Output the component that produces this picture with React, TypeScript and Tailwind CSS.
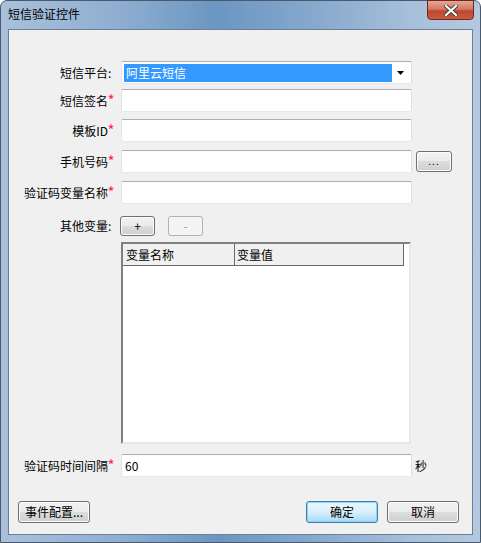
import React from "react";

const font = { fontFamily: '"Noto Sans CJK SC", "Liberation Sans", sans-serif' };

function Label({ text, star, colon }: { text: string; star?: boolean; colon?: boolean }) {
  return (
    <div className="w-[105px] flex justify-end items-center text-[12px] leading-none text-black whitespace-nowrap">
      <span>{text}</span>
      {colon && <span className="w-[6px]">:</span>}
      {star && <span className="w-[6px] text-[#ff2a55] text-[12px] font-bold -mt-[3px]">*</span>}
    </div>
  );
}

function TextBox({ value, w = "w-[291px]" }: { value?: string; w?: string }) {
  return (
    <div
      className={`${w} h-[23px] ml-[7px] bg-white border border-t-[#abadb3] border-l-[#e2e3ea] border-r-[#dbdfe6] border-b-[#e3e9ef] rounded-[2px] flex items-center pl-[3px] text-[12px] text-black`}
    >
      {value}
    </div>
  );
}

function Btn({
  children,
  w = "w-[72px]",
  h = "h-[22px]",
  primary,
  disabled,
  className = "",
}: {
  children: React.ReactNode;
  w?: string;
  h?: string;
  primary?: boolean;
  disabled?: boolean;
  className?: string;
}) {
  const base = `${w} ${h} rounded-[3px] border flex items-center justify-center text-[12px] leading-none ${className}`;
  if (disabled)
    return <div className={`${base} border-[#adb2b5] bg-[#f4f4f4] text-[#a0a0a0]`}>{children}</div>;
  if (primary)
    return (
      <div className={`${base} border-[#3c7fb1] bg-gradient-to-b from-[#eaf6fd] via-[#d9f0fc] to-[#a7d9f5] text-black shadow-[inset_0_0_0_1px_#8fd4f6]`}>
        {children}
      </div>
    );
  return (
    <div className={`${base} border-[#707070] bg-[linear-gradient(to_bottom,#f2f2f2_0%,#ebebeb_50%,#dddddd_50%,#cfcfcf_100%)] text-black shadow-[inset_0_0_0_1px_#fcfcfc]`}>
      {children}
    </div>
  );
}

export default function App() {
  return (
    <div style={font} className="w-[481px] h-[543px] relative overflow-hidden">
      <div className="w-[481px] h-[543px] rounded-t-[7px] border border-[#4a5a6e] bg-[linear-gradient(to_right,#a9c1db_0%,#8eaed1_25%,#6b96c1_45%,#86a8cd_65%,#a6bfda_85%,#b4c9e0_100%)] flex flex-col">
        {/* title bar */}
        <div className="h-[28px] flex items-start relative">
          <div className="pl-[7px] pt-[7px] text-[12px] leading-none text-black">短信验证控件</div>
          <div className="absolute right-[6px] top-[-1px] w-[47px] h-[20px] rounded-b-[4px] border border-[#6b2a20] bg-[linear-gradient(to_bottom,#e8a593_0%,#d47a63_45%,#c0462d_55%,#cc5a3c_100%)] flex items-center justify-center">
            <svg width="14" height="11" viewBox="0 0 14 11">
              <path d="M2 1 L12 10 M12 1 L2 10" stroke="#3b3b3b" strokeWidth="4" strokeLinecap="square" />
              <path d="M2 1 L12 10 M12 1 L2 10" stroke="#ffffff" strokeWidth="2.2" strokeLinecap="square" />
            </svg>
          </div>
        </div>
        {/* client area */}
        <div className="ml-[7px] mr-[7px] h-[506px] border border-[#6d7f95] bg-[#f0f0f0] flex flex-col">
          {/* 短信平台 */}
          <div className="flex items-center mt-[31px]">
            <Label text="短信平台" colon />
            <div className="w-[291px] h-[23px] ml-[7px] bg-white border border-t-[#abadb3] border-l-[#e2e3ea] border-r-[#dbdfe6] border-b-[#e3e9ef] rounded-[2px] flex items-center p-[2px]">
              <div className="w-[268px] h-[18px] bg-[#3399ff] text-white text-[12px] flex items-center pl-[2px]">阿里云短信</div>
              <div className="flex-1 flex items-center justify-center">
                <svg width="7" height="4" viewBox="0 0 7 4">
                  <path d="M0 0 L7 0 L3.5 4 Z" fill="#000" />
                </svg>
              </div>
            </div>
          </div>
          <div className="flex items-center mt-[5px]">
            <Label text="短信签名" star />
            <TextBox />
          </div>
          <div className="flex items-center mt-[7px]">
            <Label text="模板ID" star />
            <TextBox />
          </div>
          <div className="flex items-center mt-[8px]">
            <Label text="手机号码" star />
            <TextBox />
            <Btn w="w-[36px]" h="h-[21px]" className="ml-[4px]">
              <span className="tracking-[1px] text-[10px] -mt-[2px]">...</span>
            </Btn>
          </div>
          <div className="flex items-center mt-[8px]">
            <Label text="验证码变量名称" star />
            <TextBox />
          </div>
          {/* 其他变量 */}
          <div className="flex items-center mt-[12px]">
            <Label text="其他变量" colon />
            <Btn w="w-[35px]" h="h-[20px]" className="ml-[6px]">+</Btn>
            <Btn w="w-[35px]" h="h-[20px]" className="ml-[13px]" disabled>-</Btn>
          </div>
          {/* table */}
          <div className="flex mt-[6px]">
            <div className="ml-[112px] w-[290px] h-[202px] bg-white border-2 border-t-[#808080] border-l-[#808080] border-r-[#e8e8e8] border-b-[#e8e8e8] flex flex-col">
              <div className="flex h-[22px] w-[281px] bg-[#f0f0f0] border-b border-r border-[#6a6a6a] text-[12px] text-black">
                <div className="w-[112px] border-r border-[#6a6a6a] flex items-center pl-[3px]">变量名称</div>
                <div className="flex-1 flex items-center pl-[2px]">变量值</div>
              </div>
            </div>
          </div>
          {/* 时间间隔 */}
          <div className="flex items-center mt-[10px]">
            <Label text="验证码时间间隔" star />
            <TextBox value="60" />
            <span className="ml-[3px] text-[12px] text-black">秒</span>
          </div>
          {/* bottom buttons */}
          <div className="flex items-center mt-[24px]">
            <Btn className="ml-[9px]">事件配置...</Btn>
            <div className="flex-1" />
            <Btn primary>确定</Btn>
            <Btn className="ml-[9px] mr-[13px]">取消</Btn>
          </div>
        </div>
      </div>
    </div>
  );
}
